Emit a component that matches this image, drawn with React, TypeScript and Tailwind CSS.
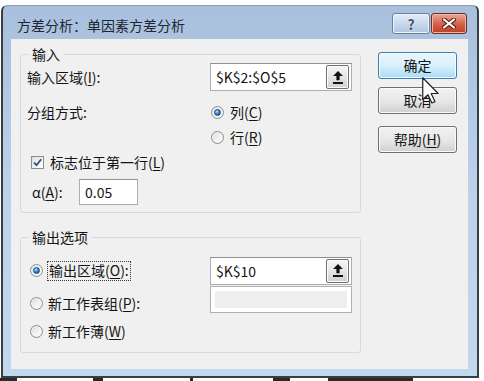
import React from "react";

const U = ({ children }: { children: React.ReactNode }) => (
  <span className="underline decoration-1 underline-offset-[2px]">{children}</span>
);

function Radio({ checked }: { checked?: boolean }) {
  return (
    <span className="flex h-[13px] w-[13px] shrink-0 items-center justify-center rounded-full border border-[#8a8d91] bg-gradient-to-br from-[#d6d9dd] via-[#eef0f2] to-[#ffffff] shadow-[inset_0_0_0_1px_#f4f4f4]">
      {checked && (
        <span className="h-[7px] w-[7px] rounded-full border border-[#1d4f86] bg-[radial-gradient(circle_at_35%_30%,#b8e0fb,#3c8ad0_45%,#124e93_90%)]" />
      )}
    </span>
  );
}

function Checkbox() {
  return (
    <span className="flex h-[13px] w-[13px] shrink-0 items-center justify-center border border-[#8a8d91] bg-gradient-to-br from-[#dcdee1] to-[#ffffff]">
      <svg width="11" height="11" viewBox="0 0 11 11">
        <path d="M2 5.5 L4.5 8.2 L9.2 2.2" fill="none" stroke="#2e4c7d" strokeWidth="1.8" />
      </svg>
    </span>
  );
}

function RefButton() {
  return (
    <span className="flex h-[24px] w-[23px] items-center justify-center rounded-[2px] border border-[#707070] bg-gradient-to-b from-[#f6f6f6] via-[#e6e6e6] to-[#d0d0d0] shadow-[inset_0_0_0_1px_#fbfbfb]">
      <svg width="10" height="13" viewBox="0 0 10 13">
        <path d="M5 0 L10 5 H6.6 V9.2 H3.4 V5 H0 Z" fill="#111" />
        <rect x="0" y="11" width="10" height="2" fill="#111" />
      </svg>
    </span>
  );
}

function RefInput({ value }: { value: string }) {
  return (
    <div className="flex h-[28px] w-[142px] items-center border border-[#abadb3] border-t-[#8e9095] bg-white pl-[5px] pr-[2px]">
      <span className="flex-1 leading-[20px]">{value}</span>
      <RefButton />
    </div>
  );
}

function Btn({ children, hover }: { children: React.ReactNode; hover?: boolean }) {
  return hover ? (
    <div className="flex h-[27px] w-[79px] items-center justify-center rounded-[3px] border border-[#3c7fb1] bg-gradient-to-b from-[#eaf6fd] via-[#d9f0fc] to-[#a9daf5] shadow-[inset_0_0_0_1px_#f4fbff]">
      {children}
    </div>
  ) : (
    <div className="flex h-[27px] w-[79px] items-center justify-center rounded-[3px] border border-[#707070] bg-gradient-to-b from-[#f2f2f2] via-[#e8e8e8] to-[#d0d0d0] shadow-[inset_0_0_0_1px_#fafafa]">
      {children}
    </div>
  );
}

export default function App() {
  return (
    <div className="relative h-[381px] w-[484px] overflow-hidden bg-white font-['Noto_Sans_CJK_SC',sans-serif] text-[14px] text-[#141414]">
      <div className="ml-[1px] mt-[5px] flex h-[373px] w-[478px] flex-col rounded-t-[6px] border-x-2 border-b-2 border-t border-[#3a3d42] border-t-[#8c9db3] bg-gradient-to-b from-[#a8c0dd] via-[#bcd2eb] to-[#c2d8ef]">
        {/* title bar */}
        <div className="flex h-[33px] shrink-0 items-start pl-[14px] pr-[10px]">
          <div className="mt-[9px] flex-1 leading-[20px] text-[#1b2533]">方差分析：单因素方差分析</div>
          <div className="mt-[7px] flex gap-[1px]">
            <div className="flex h-[21px] w-[38px] items-center justify-center rounded-[3px] border border-[#6c7f98] bg-gradient-to-b from-[#e4edf8] via-[#c8d8ec] to-[#b0c5df] shadow-[inset_0_0_0_1px_#eef4fb]">
              <span className="text-[14px] font-bold leading-none text-[#45566c] [text-shadow:0_0_2px_#ffffff]">?</span>
            </div>
            <div className="flex h-[21px] w-[36px] items-center justify-center rounded-[3px] border border-[#6b2c21] bg-gradient-to-b from-[#e9a999] via-[#d5644b] to-[#c13c22] shadow-[inset_0_0_0_1px_#eeb7a8]">
              <svg width="14" height="11" viewBox="0 0 14 11">
                <path d="M2 1.5 L12 9.5 M12 1.5 L2 9.5" stroke="#5b2219" strokeWidth="4.2" strokeLinecap="round" />
                <path d="M2 1.5 L12 9.5 M12 1.5 L2 9.5" stroke="#ffffff" strokeWidth="2.2" strokeLinecap="round" />
              </svg>
            </div>
          </div>
        </div>

        {/* content */}
        <div className="ml-[8px] mr-[9px] flex h-[330px] shrink-0 bg-[#f0f0f0] pl-[9px]">
          <div className="w-[341px]">
            {/* 输入 */}
            <fieldset className="mt-[7px] rounded-[3px] border border-[#d3dbe2] pb-[7px] pl-[6px] pr-[8px]">
              <legend className="ml-[2px] px-[3px] leading-[16px]">输入</legend>
              <div className="flex h-[30px] items-center">
                <div className="w-[183px]">
                  输入区域(<U>I</U>):
                </div>
                <RefInput value="$K$2:$O$5" />
              </div>
              <div className="mt-[8px] flex h-[25px] items-center">
                <div className="w-[183px]">分组方式:</div>
                <div className="ml-[1px] flex items-center gap-[6px]">
                  <Radio checked />
                  <span>
                    列(<U>C</U>)
                  </span>
                </div>
              </div>
              <div className="flex h-[25px] items-center">
                <div className="w-[183px]" />
                <div className="ml-[1px] flex items-center gap-[6px]">
                  <Radio />
                  <span>
                    行(<U>R</U>)
                  </span>
                </div>
              </div>
              <div className="flex h-[25px] items-center gap-[6px] pl-[4px]">
                <Checkbox />
                <span>
                  标志位于第一行(<U>L</U>)
                </span>
              </div>
              <div className="mt-[4px] flex h-[26px] items-center pl-[5px]">
                <div className="w-[47px]">
                  α(<U>A</U>):
                </div>
                <div className="flex h-[26px] w-[59px] items-center border border-[#abadb3] border-t-[#8e9095] bg-white pl-[5px]">
                  0.05
                </div>
              </div>
            </fieldset>

            {/* 输出选项 */}
            <fieldset className="mt-[16px] rounded-[3px] border border-[#d3dbe2] pb-[11px] pl-[6px] pr-[8px]">
              <legend className="ml-[2px] px-[3px] leading-[16px]">输出选项</legend>
              <div className="mt-[12px] flex h-[27px] items-center">
                <div className="flex w-[183px] items-center gap-[4px] pl-[3px]">
                  <Radio checked />
                  <span className="flex h-[20px] items-center border border-dotted border-[#3a3a3a] px-[1px]">
                    输出区域(<U>O</U>):
                  </span>
                </div>
                <RefInput value="$K$10" />
              </div>
              <div className="mt-[2px] flex h-[27px] items-start">
                <div className="flex h-[27px] w-[183px] items-center gap-[5px] pl-[3px] pt-[7px]">
                  <Radio />
                  <span>
                    新工作表组(<U>P</U>):
                  </span>
                </div>
                <div className="h-[27px] w-[142px] border border-[#adb1b6] bg-white p-[4px]">
                  <div className="h-full w-full bg-[#eeeeee]" />
                </div>
              </div>
              <div className="mt-[8px] flex h-[20px] items-center gap-[5px] pl-[3px]">
                <Radio />
                <span>
                  新工作薄(<U>W</U>)
                </span>
              </div>
            </fieldset>
          </div>

          {/* buttons */}
          <div className="ml-[17px] mt-[13px] flex flex-col">
            <Btn hover>确定</Btn>
            <div className="mt-[8px]">
              <Btn>取消</Btn>
            </div>
            <div className="mt-[12px]">
              <Btn>
                <span>
                  帮助(<U>H</U>)
                </span>
              </Btn>
            </div>
          </div>
        </div>
      </div>

      {/* fragments of the page below */}
      <div className="flex h-[3px]">
        <div className="w-[17px] bg-[#2a2a2a]" />
        <div className="ml-[76px] w-[10px] bg-[#2a2a2a]" />
        <div className="ml-[87px] w-[3px] bg-[#2a2a2a]" />
        <div className="ml-[80px] w-[17px] bg-[#2a2a2a]" />
        <div className="ml-[38px] w-[85px] bg-[#2a2a2a]" />
      </div>

      {/* mouse cursor */}
      <svg className="absolute left-[422px] top-[77px]" width="18" height="27" viewBox="0 0 12 18">
        <path d="M0.5 0.5 L0.5 15 L4 11.8 L6.6 17.3 L8.6 16.4 L6.1 11 L10.8 11 Z" fill="#ffffff" stroke="#222" strokeWidth="0.8" strokeLinejoin="round" />
      </svg>
    </div>
  );
}
